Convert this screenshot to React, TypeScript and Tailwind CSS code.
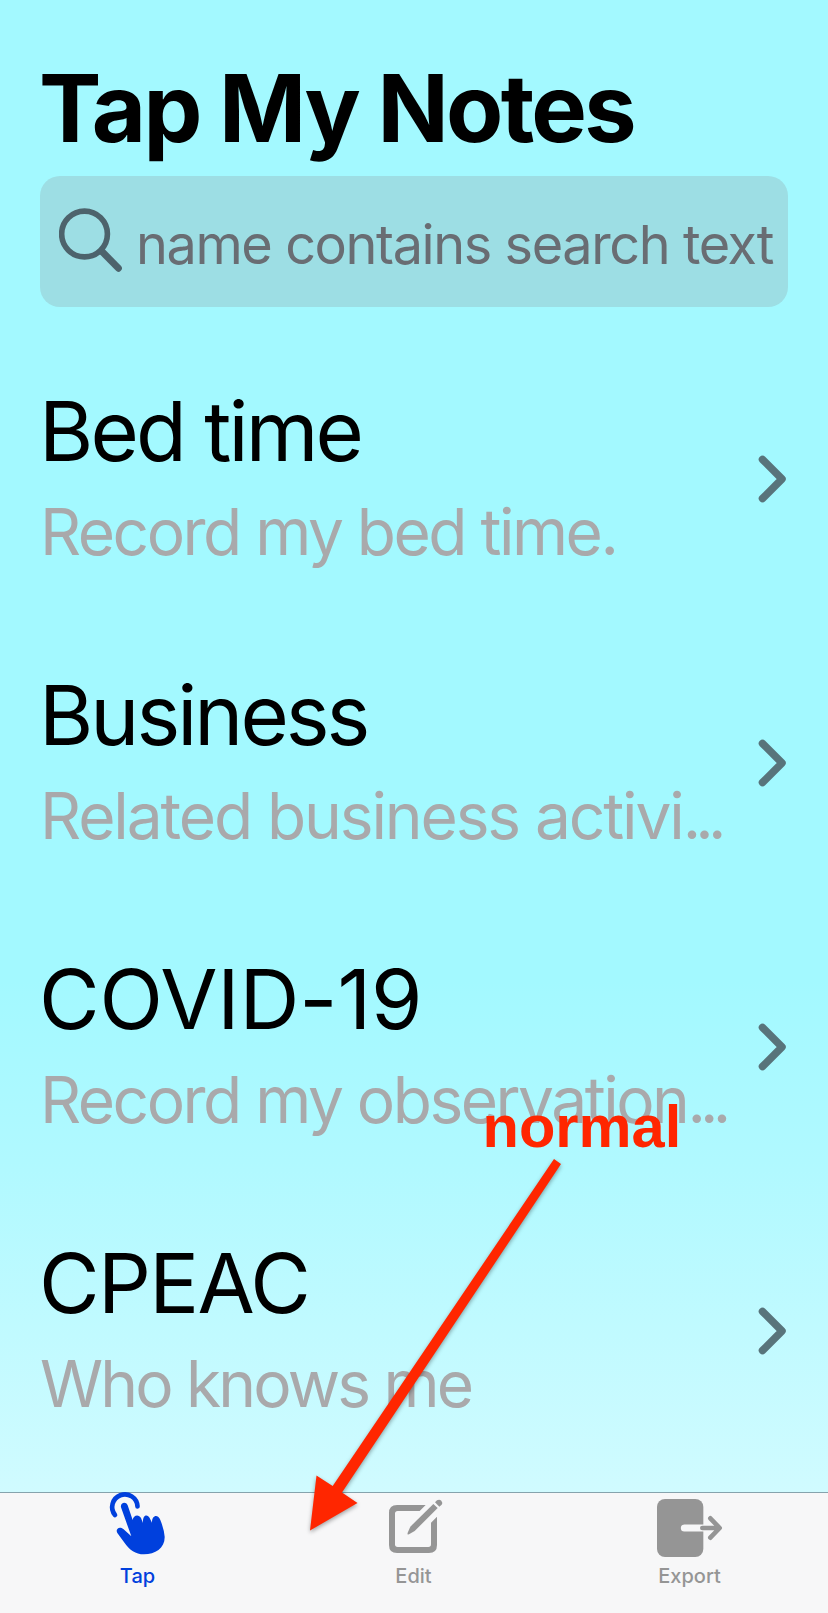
import { useState } from 'react'
import type { ReactNode } from 'react'
import clsx from 'clsx'

interface Note {
  name: string
  detail: string
  truncated?: boolean
  nameTracking: string
  detailTracking: string
}

interface Tab {
  id: string
  label: string
  icon: ReactNode
}

const notes: Note[] = [
  { name: 'Bed time', detail: 'Record my bed time.', nameTracking: 'tracking-[-0.035em]', detailTracking: 'tracking-[-0.039em]' },
  { name: 'Business', detail: 'Related business activi', truncated: true, nameTracking: 'tracking-[-0.036em]', detailTracking: 'tracking-[-0.033em]' },
  { name: 'COVID-19', detail: 'Record my observation', truncated: true, nameTracking: 'tracking-[-0.001em]', detailTracking: 'tracking-[-0.039em]' },
  { name: 'CPEAC', detail: 'Who knows me', nameTracking: 'tracking-[-0.02em]', detailTracking: 'tracking-[-0.044em]' },
]

function TapIcon() {
  return (
    <svg viewBox="294 99 240 192" className="h-16 w-20 overflow-visible" fill="none">
      <path d="M345 165 A38 38 0 1 1 412.500 139" stroke="currentColor" strokeWidth="14" strokeLinecap="round" />
      <path
        d="M363 142 C360 128 378 123 383 136 L398 180 C400 164 417 162 423 174 L429 189 C427 163 443 161 449 174 L456 188 C455 165 474 161 481 180 Q492 207 494 230 C495 264 466 283 432 283 C406 283 389 270 374 249 L352 219 C345 207 358 197 370 207 L394 229 Z"
        fill="currentColor"
      />
    </svg>
  )
}

function EditIcon() {
  return (
    <svg viewBox="312 99 240 192" className="h-16 w-20 overflow-visible" fill="currentColor">
      <path d="M467 135 H381 Q357 135 357 159 V255 Q357 279 381 279 H477 Q501 279 501 255 V170 L483 188 V253 Q483 261 475 261 H383 Q375 261 375 253 V161 Q375 153 383 153 H449 Z" />
      <path d="M490 132 L503 144 L434 213 L417 223 Q411 225 413 218 L421 200 Z" />
      <path d="M495 127 L501 121 Q508 117 514 122 Q519 128 515 134 L508 140 Z" />
    </svg>
  )
}

function ExportIcon() {
  return (
    <svg viewBox="306 99 240 192" className="h-16 w-20 overflow-visible" fill="none">
      <rect x="327" y="117" width="139" height="174" rx="24" fill="currentColor" />
      <path d="M409 204 H470" stroke="#f7f7f8" strokeWidth="21" strokeLinecap="round" />
      <path d="M463 204 H513 M487 175 L515 204 L487 233" stroke="currentColor" strokeWidth="14" strokeLinecap="round" strokeLinejoin="round" />
    </svg>
  )
}

const tabs: Tab[] = [
  { id: 'tap', label: 'Tap', icon: <TapIcon /> },
  { id: 'edit', label: 'Edit', icon: <EditIcon /> },
  { id: 'export', label: 'Export', icon: <ExportIcon /> },
]

function SearchBar() {
  return (
    <div className="mt-[18px] flex h-[131px] items-center rounded-[20px] bg-[#9ddee4] pl-[19px]">
      <svg viewBox="177 504 190 192" className="mb-[3px] h-16 w-[63px] shrink-0" fill="none" stroke="#4d636c">
        <circle cx="254" cy="582" r="69" strokeWidth="17" />
        <path d="M305 633 L356 685" strokeWidth="21" strokeLinecap="round" />
      </svg>
      <span className="ml-[14px] mt-[7px] whitespace-nowrap text-[54px] leading-[64px] tracking-[-0.026em] text-[#696d73]">
        name contains search text
      </span>
    </div>
  )
}

function NoteRow({ note }: { note: Note }) {
  return (
    <li className="flex h-[284px] items-center justify-between">
      <div className="-mt-1 flex min-w-0 flex-col gap-3 whitespace-nowrap">
        <h2 className={clsx('-ml-px text-[83px] leading-[98px] text-black', note.nameTracking)}>{note.name}</h2>
        <p className={clsx('text-[64px] leading-[80px] text-[#a9a9ab]', note.detailTracking)}>
          {note.detail}
          {note.truncated && <span className="tracking-[-0.09em]">...</span>}
        </p>
      </div>
      <svg viewBox="0 0 28 48" className="mr-[2.500px] h-12 w-7 shrink-0" fill="none">
        <path d="M4.500 4.500 L24 24 L4.500 43.500" stroke="#58747b" strokeWidth="7.500" strokeLinecap="round" strokeLinejoin="round" />
      </svg>
    </li>
  )
}

export default function App() {
  const [active, setActive] = useState('tap')

  return (
    <div className="relative flex h-[1613px] w-[828px] flex-col overflow-hidden bg-[linear-gradient(180deg,#a3f9ff_0px,#a3f9ff_980px,#b0f9ff_1160px,#d0fbff_1492px)] font-['Inter',sans-serif]">
      <main className="h-[1492px] shrink-0 px-10 pt-[58px]">
        <h1 className="-ml-px whitespace-nowrap text-[93.500px] font-bold leading-[100px] tracking-[-0.029em] text-black">Tap My Notes</h1>
        <SearchBar />
        <ul className="mt-[30px]">
          {notes.map(note => (
            <NoteRow key={note.name} note={note} />
          ))}
        </ul>
      </main>

      <nav className="relative grid h-[121px] shrink-0 grid-cols-3 border-t border-[#86a3ad] bg-[#f7f7f8]">
        {tabs.map(tab => (
          <button
            key={tab.id}
            onClick={() => setActive(tab.id)}
            className={clsx('flex flex-col items-center', active === tab.id ? 'text-[#0040dd]' : 'text-[#959595]')}
          >
            {tab.icon}
            <span className="mr-px mt-[7px] text-[20px] font-medium leading-6">{tab.label}</span>
          </button>
        ))}
      </nav>

      {/* annotation over the screen */}
      <span className="absolute left-[482.500px] top-[1092px] font-['Liberation_Sans',Arial,sans-serif] text-[59.600px] font-bold leading-[70px] text-[#ff2600]">
        normal
      </span>
      <svg viewBox="0 0 828 1613" className="pointer-events-none absolute inset-0 h-full w-full drop-shadow-[0_2px_2px_rgba(0,0,0,0.35)]">
        <polygon points="554,1159 561,1164 342,1492.500 357.500,1503 310,1530.500 316.500,1475.500 332.700,1486" fill="#ff2600" />
      </svg>
    </div>
  )
}
